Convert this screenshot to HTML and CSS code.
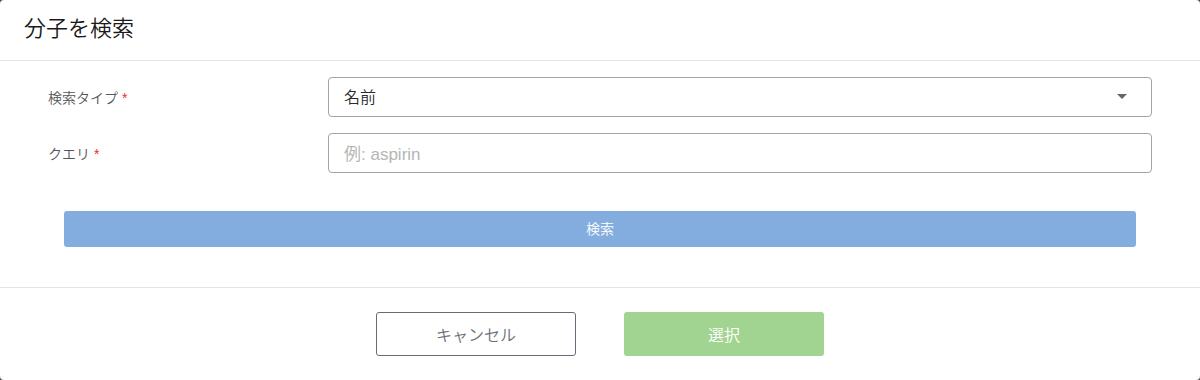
FILE: index.html
```html
<!DOCTYPE html>
<html lang="ja">
<head>
<meta charset="utf-8">
<link rel="stylesheet" href="styles.css">
</head>
<body>
<div class="dialog">
  <div class="header"><h1 class="title">分子を検索</h1></div>
  <div class="body">
    <div class="row">
      <label class="label">検索タイプ <span class="req">*</span></label>
      <div class="control select">
        <span class="value">名前</span>
        <span class="caret"></span>
      </div>
    </div>
    <div class="row">
      <label class="label">クエリ <span class="req">*</span></label>
      <div class="control input"><span class="placeholder">例: aspirin</span></div>
    </div>
    <div class="search-wrap"><button class="search">検索</button></div>
  </div>
  <div class="footer">
    <button class="btn cancel">キャンセル</button>
    <button class="btn ok">選択</button>
  </div>
</div>
</body>
</html>
```
FILE: styles.css
```css
* { box-sizing: border-box; }
html, body { margin: 0; padding: 0; }
body {
  background: #4a4a4a;
  font-family: "Liberation Sans", "Noto Sans CJK JP", sans-serif;
  font-weight: 350;
  width: 1200px;
  height: 380px;
  overflow: hidden;
}
.dialog {
  width: 1200px;
  height: 380px;
  background: #fff;
  border-radius: 4px;
  display: flex;
  flex-direction: column;
}
.header {
  height: 61px;
  border-bottom: 1px solid #e4e4e4;
  padding: 0 24px;
  display: flex;
  align-items: center;
}
.title {
  margin: 0;
  font-size: 22px;
  font-weight: 350;
  color: #1a1a1a;
  line-height: 1;
  padding-bottom: 2px;
}
.body {
  padding: 16px 48px 0;
  height: 227px;
  border-bottom: 1px solid #e4e4e4;
}
.row {
  display: flex;
  align-items: center;
  margin-bottom: 16px;
}
.label {
  width: 280px;
  font-size: 14px;
  color: #555;
  padding-bottom: 1px;
}
.req { color: #f02b2b; font-weight: 400; }
.control {
  flex: 1;
  height: 40px;
  border: 1px solid #a4a4a4;
  border-radius: 4px;
  display: flex;
  align-items: center;
  padding: 0 16px 2px 15px;
  font-size: 16px;
}
.value { color: #2a2a2a; flex: 1; }
.placeholder { color: #b5b5b5; font-size: 17px; font-weight: 400; }
.caret {
  width: 0; height: 0;
  border-left: 5px solid transparent;
  border-right: 5px solid transparent;
  border-top: 5px solid #666;
  margin-right: 8px;
}
.search-wrap { padding: 22px 16px 0; }
.search {
  width: 100%;
  height: 36px;
  border: none;
  border-radius: 3px;
  background: #84addf;
  color: #fff;
  font-family: inherit;
  font-weight: 350;
  font-size: 14px;
  padding-bottom: 3px;
}
.footer {
  flex: 1;
  display: flex;
  justify-content: center;
  align-items: center;
  gap: 48px;
}
.btn {
  width: 200px;
  height: 44px;
  border-radius: 3px;
  font-family: inherit;
  font-weight: 350;
  font-size: 16px;
  padding-bottom: 2px;
}
.cancel {
  background: #fff;
  border: 1px solid #646c78;
  color: #6a707a;
}
.ok {
  background: #a1d490;
  border: none;
  color: #fff;
}
```
